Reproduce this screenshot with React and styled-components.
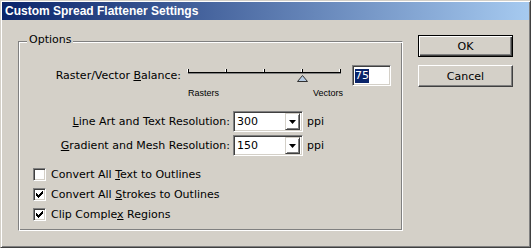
import React from 'react'
import styled, { createGlobalStyle } from 'styled-components'

const GlobalStyle = createGlobalStyle`
  html, body {
    margin: 0;
    padding: 0;
    background: #d4d0c8;
  }
  body {
    font-family: "DejaVu Sans", "Liberation Sans", sans-serif;
    font-size: 11px;
    color: #000;
  }
`

const Window = styled.div`
  width: 531px;
  height: 248px;
  box-sizing: border-box;
  border: 1px solid;
  border-color: #d4d0c8 #404040 #404040 #d4d0c8;
  box-shadow: inset 1px 1px #fff, inset -1px -1px #808080;
  padding: 1px;
  background: #d4d0c8;
  display: flex;
  flex-direction: column;
`
const TitleBar = styled.div`
  height: 18px;
  flex: none;
  display: flex;
  align-items: center;
  padding-left: 3px;
  background: linear-gradient(to right, #0a246a, #a6caf0);
  color: #fff;
  font: bold 12px "Liberation Sans", Arial, sans-serif;
  white-space: nowrap;
`
const Body = styled.div`
  display: flex;
  align-items: flex-start;
  padding-left: 16px;
`
const GroupBox = styled.div`
  position: relative;
  width: 385px;
  height: 190px;
  margin-top: 21px;
  box-sizing: border-box;
  border: 1px solid;
  border-color: #808080 #fff #fff #808080;
  box-shadow: inset 1px 1px #fff, inset -1px -1px #808080;
  padding-top: 23px;
  display: flex;
  flex-direction: column;
`
const Legend = styled.span`
  position: absolute;
  left: 8px;
  top: -9px;
  padding: 0 2px;
  line-height: 13px;
  background: #d4d0c8;
`
const Row = styled.div`
  display: flex;
  align-items: flex-start;
  margin-top: ${({ gap }) => gap || 0}px;
`
const Label = styled.div`
  width: ${({ w }) => w}px;
  height: 21px;
  line-height: 21px;
  text-align: right;
  white-space: nowrap;
`
const SliderBox = styled.div`
  margin-left: 5px;
  width: 160px;
  display: flex;
  flex-direction: column;
`
const SliderTrack = styled.svg`
  display: block;
`
const SliderLabels = styled.div`
  display: flex;
  justify-content: space-between;
  margin-top: 3px;
  padding: 0 3px 0 2px;
  font: 9px "Liberation Sans", Arial, sans-serif;
  line-height: 11px;
`
const Sunken = styled.div`
  box-sizing: border-box;
  height: 21px;
  border: 1px solid;
  border-color: #808080 #fff #fff #808080;
  box-shadow: inset 1px 1px #404040, inset -1px -1px #d4d0c8;
  background: #fff;
  display: flex;
  align-items: center;
`
const NumberField = styled(Sunken)`
  width: 39px;
  margin-left: 6px;
  padding-left: 2px;
`
const Selected = styled.span`
  background: #0a246a;
  color: #fff;
  line-height: 14px;
`
const Combo = styled(Sunken)`
  width: 70px;
  margin-left: 3px;
  padding: 2px 2px 2px 3px;
`
const ComboValue = styled.span`
  flex: 1;
`
const DropButton = styled.div`
  width: 15px;
  height: 17px;
  box-sizing: border-box;
  border: 1px solid;
  border-color: #d4d0c8 #404040 #404040 #d4d0c8;
  box-shadow: inset 1px 1px #fff, inset -1px -1px #808080;
  display: flex;
  align-items: center;
  justify-content: center;
`
const Unit = styled.span`
  margin-left: 4px;
  line-height: 21px;
`
const CheckRow = styled.label`
  display: flex;
  align-items: center;
  height: 13px;
  margin-left: 14px;
  margin-top: ${({ gap }) => gap}px;
  white-space: nowrap;
`
const CheckText = styled.span`
  margin-left: 5px;
  white-space: pre;
`
const CheckBox = styled.span`
  width: 13px;
  height: 13px;
  box-sizing: border-box;
  border: 1px solid;
  border-color: #808080 #fff #fff #808080;
  box-shadow: inset 1px 1px #404040, inset -1px -1px #d4d0c8;
  background: #fff;
  display: flex;
  align-items: center;
  justify-content: center;
`
const ButtonColumn = styled.div`
  display: flex;
  flex-direction: column;
  gap: 8px;
  margin-left: 15px;
  margin-top: 15px;
`
const Button = styled.button`
  width: 95px;
  height: 22px;
  box-sizing: border-box;
  padding: 0;
  background: #d4d0c8;
  font: inherit;
  color: #000;
  border: 1px solid;
  border-color: ${({ primary }) => (primary ? '#000' : '#fff #404040 #404040 #fff')};
  box-shadow: ${({ primary }) =>
    primary
      ? 'inset 1px 1px #fff, inset -1px -1px #404040, inset -2px -2px #808080'
      : 'inset -1px -1px #808080'};
`

const checkColumns = [2, 3, 4, 3, 2, 1, 0]

function Check() {
  return (
    <svg width="7" height="7" viewBox="0 0 7 7">
      {checkColumns.map((y, x) => (
        <rect key={x} x={x} y={y} width="1" height="3" fill="#000" />
      ))}
    </svg>
  )
}

function Arrow() {
  return (
    <svg width="7" height="4" viewBox="0 0 7 4">
      <polygon points="0,0 7,0 3.5,4" fill="#000" />
    </svg>
  )
}

function Slider() {
  const ticks = [2, 40, 78, 116, 154]
  return (
    <SliderBox>
      <SliderTrack width="160" height="20">
        <rect x="2" y="7" width="153" height="1" fill="#000" />
        <rect x="2" y="8" width="153" height="1" fill="#808080" />
        {ticks.map(x => (
          <g key={x}>
            <rect x={x - 1} y="4" width="1" height="3" fill="#fff" />
            <rect x={x} y="4" width="1" height="4" fill="#000" />
          </g>
        ))}
        <polygon
          points="116.5,10.5 121.5,16.5 111.5,16.5"
          fill="#b6cbe2"
          stroke="#303030"
          strokeWidth="1"
        />
      </SliderTrack>
      <SliderLabels>
        <span>Rasters</span>
        <span>Vectors</span>
      </SliderLabels>
    </SliderBox>
  )
}

function Option({ checked, children, gap }) {
  return (
    <CheckRow gap={gap}>
      <CheckBox>{checked && <Check />}</CheckBox>
      <CheckText>{children}</CheckText>
    </CheckRow>
  )
}

export default function App() {
  return (
    <Window>
      <GlobalStyle />
      <TitleBar>Custom Spread Flattener Settings</TitleBar>
      <Body>
        <GroupBox>
          <Legend>Options</Legend>
          <Row>
            <Label w={162}>
              Raster/Vector <u>B</u>alance:
            </Label>
            <Slider />
            <NumberField>
              <Selected>75</Selected>
            </NumberField>
          </Row>
          <Row gap={12}>
            <Label w={211}>
              <u>L</u>ine Art and Text Resolution:
            </Label>
            <Combo>
              <ComboValue>300</ComboValue>
              <DropButton>
                <Arrow />
              </DropButton>
            </Combo>
            <Unit>ppi</Unit>
          </Row>
          <Row gap={3}>
            <Label w={211}>
              <u>G</u>radient and Mesh Resolution:
            </Label>
            <Combo>
              <ComboValue>150</ComboValue>
              <DropButton>
                <Arrow />
              </DropButton>
            </Combo>
            <Unit>ppi</Unit>
          </Row>
          <Option gap={12}>
            Convert All <u>T</u>ext to Outlines
          </Option>
          <Option gap={7} checked>
            Convert All <u>S</u>trokes to Outlines
          </Option>
          <Option gap={7} checked>
            Clip Comple<u>x</u> Regions
          </Option>
        </GroupBox>
        <ButtonColumn>
          <Button primary>OK</Button>
          <Button>Cancel</Button>
        </ButtonColumn>
      </Body>
    </Window>
  )
}
